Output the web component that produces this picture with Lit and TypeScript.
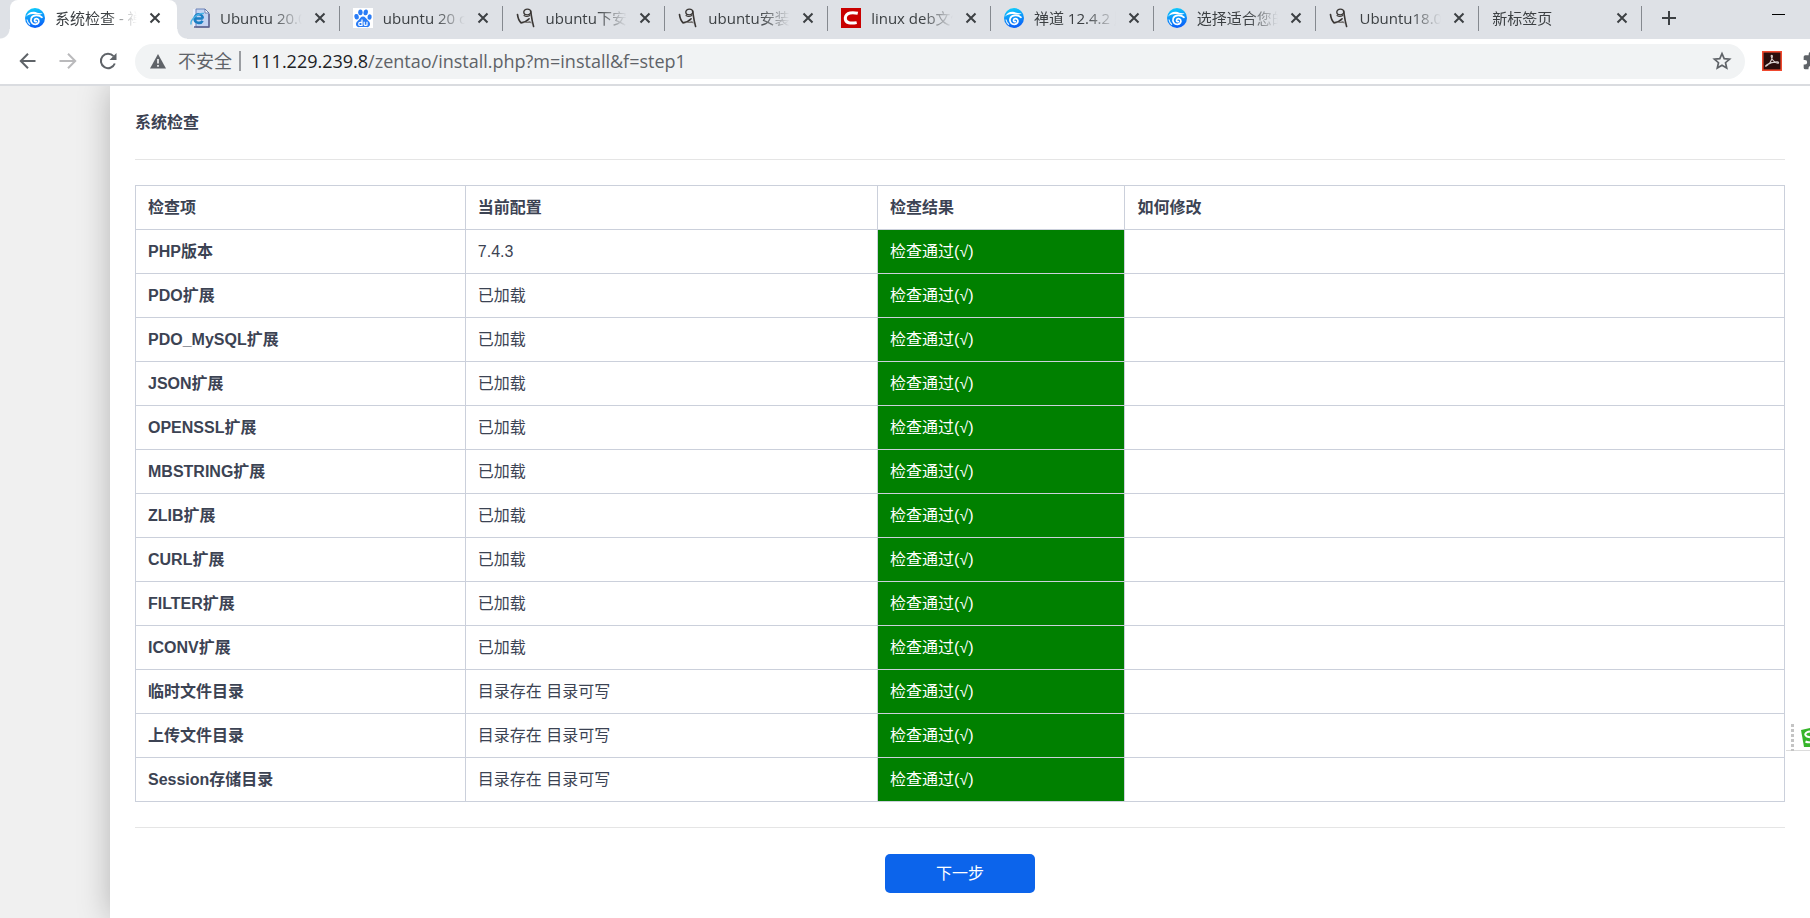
import { LitElement, html, svg, css, nothing } from "lit";
import { customElement } from "lit/decorators.js";

type IconName = "zentao" | "ie" | "baidu" | "yisu" | "csdn" | "none";

interface Tab {
  title: string;
  icon: IconName;
  active?: boolean;
}

interface Check {
  name: string;
  current: string;
}

const TABS: Tab[] = [
  { title: "系统检查 - 禅道", icon: "zentao", active: true },
  { title: "Ubuntu 20.04", icon: "ie" },
  { title: "ubuntu 20 cd", icon: "baidu" },
  { title: "ubuntu下安装", icon: "yisu" },
  { title: "ubuntu安装软", icon: "yisu" },
  { title: "linux deb文件", icon: "csdn" },
  { title: "禅道 12.4.2 版", icon: "zentao" },
  { title: "选择适合您的", icon: "zentao" },
  { title: "Ubuntu18.04", icon: "yisu" },
  { title: "新标签页", icon: "none" },
];

const LOADED = "已加载";
const WRITABLE = "目录存在 目录可写";

const CHECKS: Check[] = [
  { name: "PHP版本", current: "7.4.3" },
  { name: "PDO扩展", current: LOADED },
  { name: "PDO_MySQL扩展", current: LOADED },
  { name: "JSON扩展", current: LOADED },
  { name: "OPENSSL扩展", current: LOADED },
  { name: "MBSTRING扩展", current: LOADED },
  { name: "ZLIB扩展", current: LOADED },
  { name: "CURL扩展", current: LOADED },
  { name: "FILTER扩展", current: LOADED },
  { name: "ICONV扩展", current: LOADED },
  { name: "临时文件目录", current: WRITABLE },
  { name: "上传文件目录", current: WRITABLE },
  { name: "Session存储目录", current: WRITABLE },
];

const favicons = {
  zentao: svg`
    <defs><linearGradient id="zt" x1="0" y1="0" x2="0.2" y2="1">
      <stop offset="0" stop-color="#10d4fc"/><stop offset="1" stop-color="#0a62f8"/>
    </linearGradient></defs>
    <circle cx="10" cy="10" r="10" fill="url(#zt)"/>
    <path d="M.8 8.800C2.600 5.400 5.600 3.400 9 3.700c3 .3 4.800 2.300 8.600 1.300-2 2.200-4.600 1.600-7 1.200C6.800 5.500 3.400 6 .8 8.800z" fill="#fff"/>
    <path d="M17 9.300C14 6.600 7.600 6.600 6.200 10.400c-1.100 3.300 1.300 6.200 4.300 6 2.700-.2 4.100-2.600 3.100-4.500-1-1.700-3.700-1.600-4.100.2-.2 1.200.9 1.900 1.900 1.500" fill="none" stroke="#fff" stroke-width="1.700" stroke-linecap="round"/>
    <path d="M2 11.500c.4 2.300 1.400 4 3 5.200" fill="none" stroke="#d5efff" stroke-width="1.200"/>`,
  ie: svg`
    <path d="M3 1h12l4 4v14H3z" fill="#e9eefb"/>
    <path d="M6 1h9l4 4v14H6z" fill="#c3d3f2" stroke="#6c83b8" stroke-width="1"/>
    <path d="M15 1v4h4z" fill="#fff" stroke="#54699e" stroke-width=".8"/>
    <path d="M19 6v13H4" fill="none" stroke="#5b5f8c" stroke-width="1.400"/>
    <path d="M12.800 10.500H4.600c0-5.600 8.200-5.600 8.200 0M4.600 10.500c0 5 6.200 5.600 8 2.300" fill="none" stroke="#1b7fc4" stroke-width="2.600"/>
    <path d="M1.200 16.500C-.5 12 8 4.500 14 5.500" fill="none" stroke="#4cb3e6" stroke-width="1.400"/>`,
  baidu: svg`
    <rect width="20" height="20" fill="#fff"/>
    <g fill="#2a7cf6">
      <ellipse cx="3.600" cy="8.800" rx="2.200" ry="2.800" transform="rotate(-12 3.600 8.800)"/>
      <ellipse cx="7.400" cy="4.300" rx="2.200" ry="2.900"/>
      <ellipse cx="12.700" cy="4.400" rx="2.200" ry="2.900" transform="rotate(10 12.700 4.400)"/>
      <ellipse cx="16.600" cy="9" rx="2.100" ry="2.800" transform="rotate(8 16.600 9)"/>
      <path d="M10 8.400c2.200 0 3 2 4.500 3.600 1.400 1.400 2.900 2.600 2.500 4.800-.4 2-2 2.500-3.600 2.300-2.200-.3-4.600-.3-6.800 0-1.700.2-3.300-.6-3.600-2.300-.4-2.200 1.300-3.500 2.600-4.800C7 10.500 7.800 8.400 10 8.400z"/>
    </g>
    <path d="M9 11.500v6H7.200c-2 0-2-3.200 0-3.200H9M11.200 13.800v2.600c0 1.300 2.800 1.300 2.800 0v-2.600 3.700" fill="none" stroke="#fff" stroke-width="1.200"/>`,
  yisu: svg`
    <g fill="none" stroke="#3a3735" stroke-linecap="round">
      <path d="M1.500 6.500c.4 3.500 1.600 6.500 3.600 8.300 3.200-.3 6-1.800 8-4" stroke-width="1.700"/>
      <ellipse cx="11.300" cy="4" rx="3.500" ry="2.900" stroke-width="1.400"/>
      <path d="M14.600 3c.9 4 .8 8 3 15.500" stroke-width="1.600"/>
      <path d="M13.800 7.500c-2 1.200-4.400 1-5.800 0" stroke-width="1.100"/>
    </g>
    <path d="M5 15.500l9-2.500 2.500 2.500c-4-.6-7.500-.4-11.500 0z" fill="#7b7876"/>`,
  csdn: svg`
    <rect width="20" height="20" fill="#c90000"/>
    <path d="M16.800 5.300C12 4.200 5 4 4.300 10c-.4 5.600 6 5.600 11.400 4.600" fill="none" stroke="#fff" stroke-width="3"/>`,
};

@customElement("browser-tab-strip")
export class BrowserTabStrip extends LitElement {
  static styles = css`
    :host {
      display: flex;
      height: 39px;
      background: #dee1e6;
      font: 15px/20px "Open Sans", "Noto Sans CJK SC", sans-serif;
      color: #3c4043;
    }
    .tabs {
      display: flex;
      flex: 1;
      min-width: 0;
      padding-left: 10px;
    }
    .tab {
      display: flex;
      flex: 1 1 0;
      min-width: 0;
      align-items: center;
      gap: 10px;
      height: 39px;
      padding: 0 12px 7px 13px;
      box-sizing: border-box;
      background: linear-gradient(#85898f, #85898f) right 0 top 6px / 1px 25px no-repeat;
    }
    .active {
      position: relative;
      flex: 0 0 167px;
      padding: 0 14px 7px 15px;
      background: #fff;
      border-radius: 8px 8px 0 0;
    }
    .active::before,
    .active::after {
      content: "";
      position: absolute;
      bottom: 0;
      width: 10px;
      height: 10px;
    }
    .active::before {
      left: -10px;
      background: radial-gradient(circle at 0 0, transparent 9px, #fff 10px);
    }
    .active::after {
      right: -10px;
      background: radial-gradient(circle at 100% 0, transparent 9px, #fff 10px);
    }
    .favicon {
      flex: none;
      width: 20px;
      height: 20px;
      margin-top: 4px;
    }
    .title {
      flex: 1;
      min-width: 0;
      height: 20px;
      margin-top: 4px;
      overflow: hidden;
      white-space: nowrap;
      color: inherit;
      text-decoration: none;
      mask-image: linear-gradient(to left, transparent, #000 30px);
    }
    button {
      display: grid;
      place-items: center;
      flex: none;
      padding: 0;
      border: 0;
      background: none;
      color: #3c4043;
    }
    .close {
      width: 16px;
      height: 16px;
      margin-top: 4px;
    }
    .controls {
      display: flex;
      flex: none;
      width: 168px;
      justify-content: space-between;
      box-sizing: border-box;
      padding: 0 18px 0 17px;
    }
    .new {
      width: 20px;
      height: 36px;
    }
    .minimize {
      width: 28px;
      height: 28px;
    }
  `;

  render() {
    return html`
      <nav class="tabs" aria-label="标签页">
        ${TABS.map(
          (tab) => html`
            <div class="tab ${tab.active ? "active" : ""}">
              ${tab.icon === "none"
                ? nothing
                : html`<svg class="favicon" viewBox="0 0 20 20" aria-hidden="true">${favicons[tab.icon]}</svg>`}
              <a class="title" href="#">${tab.title}</a>
              <button class="close" aria-label="关闭">
                <svg width="12" height="12" viewBox="0 0 12 12"><path d="M1.500 1.500l9 9M10.500 1.500l-9 9" stroke="currentColor" stroke-width="2"/></svg>
              </button>
            </div>
          `
        )}
      </nav>
      <div class="controls">
        <button class="new" aria-label="新建标签页">
          <svg width="16" height="16" viewBox="0 0 16 16"><path d="M8 1v14M1 8h14" stroke="currentColor" stroke-width="2"/></svg>
        </button>
        <button class="minimize" aria-label="最小化">
          <svg width="13" height="1" viewBox="0 0 13 1"><path d="M0 .5h13" stroke="#000"/></svg>
        </button>
      </div>
    `;
  }
}

@customElement("browser-toolbar")
export class BrowserToolbar extends LitElement {
  static styles = css`
    :host {
      display: flex;
      align-items: center;
      height: 47px;
      box-sizing: border-box;
      padding: 0 0 1px 18px;
      border-bottom: 2px solid #dadce0;
      background: #fff;
      font: 18px/24px "Open Sans", "Noto Sans CJK SC", sans-serif;
      color: #5f6368;
      overflow: hidden;
    }
    button {
      display: grid;
      place-items: center;
      flex: none;
      width: 20px;
      height: 20px;
      padding: 0;
      border: 0;
      background: none;
      color: #5f6368;
    }
    .nav {
      display: flex;
      gap: 20px;
      flex: none;
    }
    .forward {
      color: #bababc;
    }
    .omnibox {
      display: flex;
      flex: 1;
      min-width: 0;
      align-items: center;
      height: 35px;
      margin-left: 17px;
      padding: 0 13px 0 15px;
      box-sizing: border-box;
      border-radius: 18px;
      background: #f1f3f4;
    }
    .warn {
      flex: none;
      margin-right: 12px;
    }
    .divider {
      width: 2px;
      height: 20px;
      margin: 0 10px 0 7px;
      background: #9a9da1;
    }
    .url {
      flex: 1;
      white-space: nowrap;
    }
    .host {
      color: #202124;
    }
    .extensions {
      display: flex;
      flex: none;
      gap: 20px;
      width: 48px;
      margin-left: 17px;
      overflow: hidden;
    }
  `;

  render() {
    return html`
      <div class="nav">
        <button aria-label="后退">
          <svg width="20" height="20" viewBox="0 0 20 20" fill="none" stroke="currentColor" stroke-width="2"><path d="M17.500 10H3.500M10 2.800L2.800 10l7.200 7.200"/></svg>
        </button>
        <button class="forward" aria-label="前进">
          <svg width="20" height="20" viewBox="0 0 20 20" fill="none" stroke="currentColor" stroke-width="2"><path d="M1.500 10h15M10 2.800l7.200 7.200-7.200 7.200"/></svg>
        </button>
        <button aria-label="重新加载">
          <svg width="20" height="20" viewBox="0 0 20 20"><path d="M16.800 12.500A7.200 7.200 0 1 1 15.500 5.200" fill="none" stroke="currentColor" stroke-width="2"/><path d="M18.500 2v7h-7z" fill="currentColor"/></svg>
        </button>
      </div>
      <div class="omnibox">
        <svg class="warn" width="16" height="15" viewBox="0 0 16 15" aria-hidden="true"><path d="M8 0l8 14.500H0z" fill="#5f6368"/><path d="M8 5v4.500M8 11v1.800" stroke="#f1f3f4" stroke-width="1.700"/></svg>
        <span>不安全</span>
        <span class="divider"></span>
        <span class="url"><span class="host">111.229.239.8</span>/zentao/install.php?m=install&amp;f=step1</span>
        <button aria-label="收藏">
          <svg width="20" height="20" viewBox="0 0 20 20"><path d="M10 2.600l2.200 5 5.400.5-4.100 3.600 1.200 5.300-4.700-2.800L5.300 17l1.200-5.300L2.400 8.100l5.400-.5z" fill="none" stroke="currentColor" stroke-width="1.700"/></svg>
        </button>
      </div>
      <div class="extensions">
        <button aria-label="Adobe Acrobat">
          <svg width="20" height="20" viewBox="0 0 20 20"><rect x=".8" y=".8" width="18.400" height="18.400" fill="#2a0d0c" stroke="#f0492f" stroke-width="1.600"/><path d="M4 15.300c2.600-.8 6-6 6.400-9.800.1-1.800-1.500-1.600-1.200 0 .5 2.800 3.400 6.500 6.600 6.800 1.200 0 1-1.400-.6-1.400-3 0-7.400 1-10.600 3.100-1.200.8-1.300 1.400-.6 1.300z" fill="none" stroke="#d8cfcd" stroke-width="1.100"/></svg>
        </button>
        <button aria-label="扩展程序">
          <svg width="20" height="20" viewBox="0 0 24 24"><path d="M20.500 11H19V7a2 2 0 0 0-2-2h-4V3.500a2.500 2.500 0 0 0-5 0V5H4a2 2 0 0 0-2 2v3.800h1.500a2.700 2.700 0 0 1 0 5.400H2V20a2 2 0 0 0 2 2h3.800v-1.500a2.700 2.700 0 0 1 5.400 0V22H17a2 2 0 0 0 2-2v-4h1.500a2.500 2.500 0 0 0 0-5z" fill="currentColor"/></svg>
        </button>
      </div>
    `;
  }
}

@customElement("install-check")
export class InstallCheck extends LitElement {
  static styles = css`
    :host {
      display: block;
      padding: 25px;
      background: #fff;
      box-shadow: 0 0 30px rgba(0, 0, 0, 0.25);
      font: 16px/24px "Liberation Sans", "Noto Sans CJK SC", sans-serif;
      color: #3c4353;
    }
    h1 {
      margin: 0;
      padding-bottom: 24px;
      border-bottom: 1px solid #e5e5e5;
      font: inherit;
      font-weight: 700;
    }
    table {
      width: 100%;
      margin: 25px 0;
      border-collapse: collapse;
      table-layout: fixed;
    }
    th,
    td {
      height: 44px;
      box-sizing: border-box;
      padding: 0 12px;
      border: 1px solid #cbd0db;
      text-align: left;
    }
    .name {
      width: 20%;
    }
    .current {
      width: 25%;
    }
    .result {
      width: 15%;
    }
    .ok {
      background: #008000;
      color: #fff;
    }
    footer {
      display: flex;
      justify-content: center;
      padding-top: 26px;
      border-top: 1px solid #e5e5e5;
    }
    button {
      width: 150px;
      height: 39px;
      padding: 0;
      border: 0;
      border-radius: 5px;
      background: #0c64eb;
      color: #fff;
      font: inherit;
    }
  `;

  render() {
    return html`
      <h1>系统检查</h1>
      <table>
        <thead>
          <tr>
            <th class="name" scope="col">检查项</th>
            <th class="current" scope="col">当前配置</th>
            <th class="result" scope="col">检查结果</th>
            <th scope="col">如何修改</th>
          </tr>
        </thead>
        <tbody>
          ${CHECKS.map(
            (check) => html`
              <tr>
                <th scope="row">${check.name}</th>
                <td>${check.current}</td>
                <td class="ok">检查通过(√)</td>
                <td></td>
              </tr>
            `
          )}
        </tbody>
      </table>
      <footer><button>下一步</button></footer>
    `;
  }
}

@customElement("app-root")
export class AppRoot extends LitElement {
  static styles = css`
    :host {
      display: flex;
      flex-direction: column;
      position: relative;
      height: 100vh;
      overflow: hidden;
      background: #f0f0f0;
    }
    .chrome {
      flex: none;
    }
    .page {
      flex: 1;
      min-height: 0;
      overflow: hidden;
      padding-left: 110px;
    }
    .ime {
      position: absolute;
      right: 0;
      bottom: 166px;
      width: 24px;
      height: 30px;
    }
  `;

  render() {
    return html`
      <header class="chrome">
        <browser-tab-strip></browser-tab-strip>
        <browser-toolbar></browser-toolbar>
      </header>
      <main class="page"><install-check></install-check></main>
      <svg class="ime" viewBox="0 0 24 30" aria-hidden="true">
        <rect width="24" height="29" fill="#fff"/>
        <path d="M0 28.500h24" stroke="#dcdcdc"/>
        <path d="M6.500 2v27" stroke="#c4c4c4" stroke-width="3" stroke-dasharray="3 2"/>
        <path d="M15 8l9-2v19h-6z" fill="#36b52a"/>
        <path d="M24 9.500c-5 .5-6 3.500-3 5l3 .8M19.500 19.500c1.500.8 3 1 4.500.8" fill="none" stroke="#fff" stroke-width="2"/>
      </svg>
    `;
  }
}
